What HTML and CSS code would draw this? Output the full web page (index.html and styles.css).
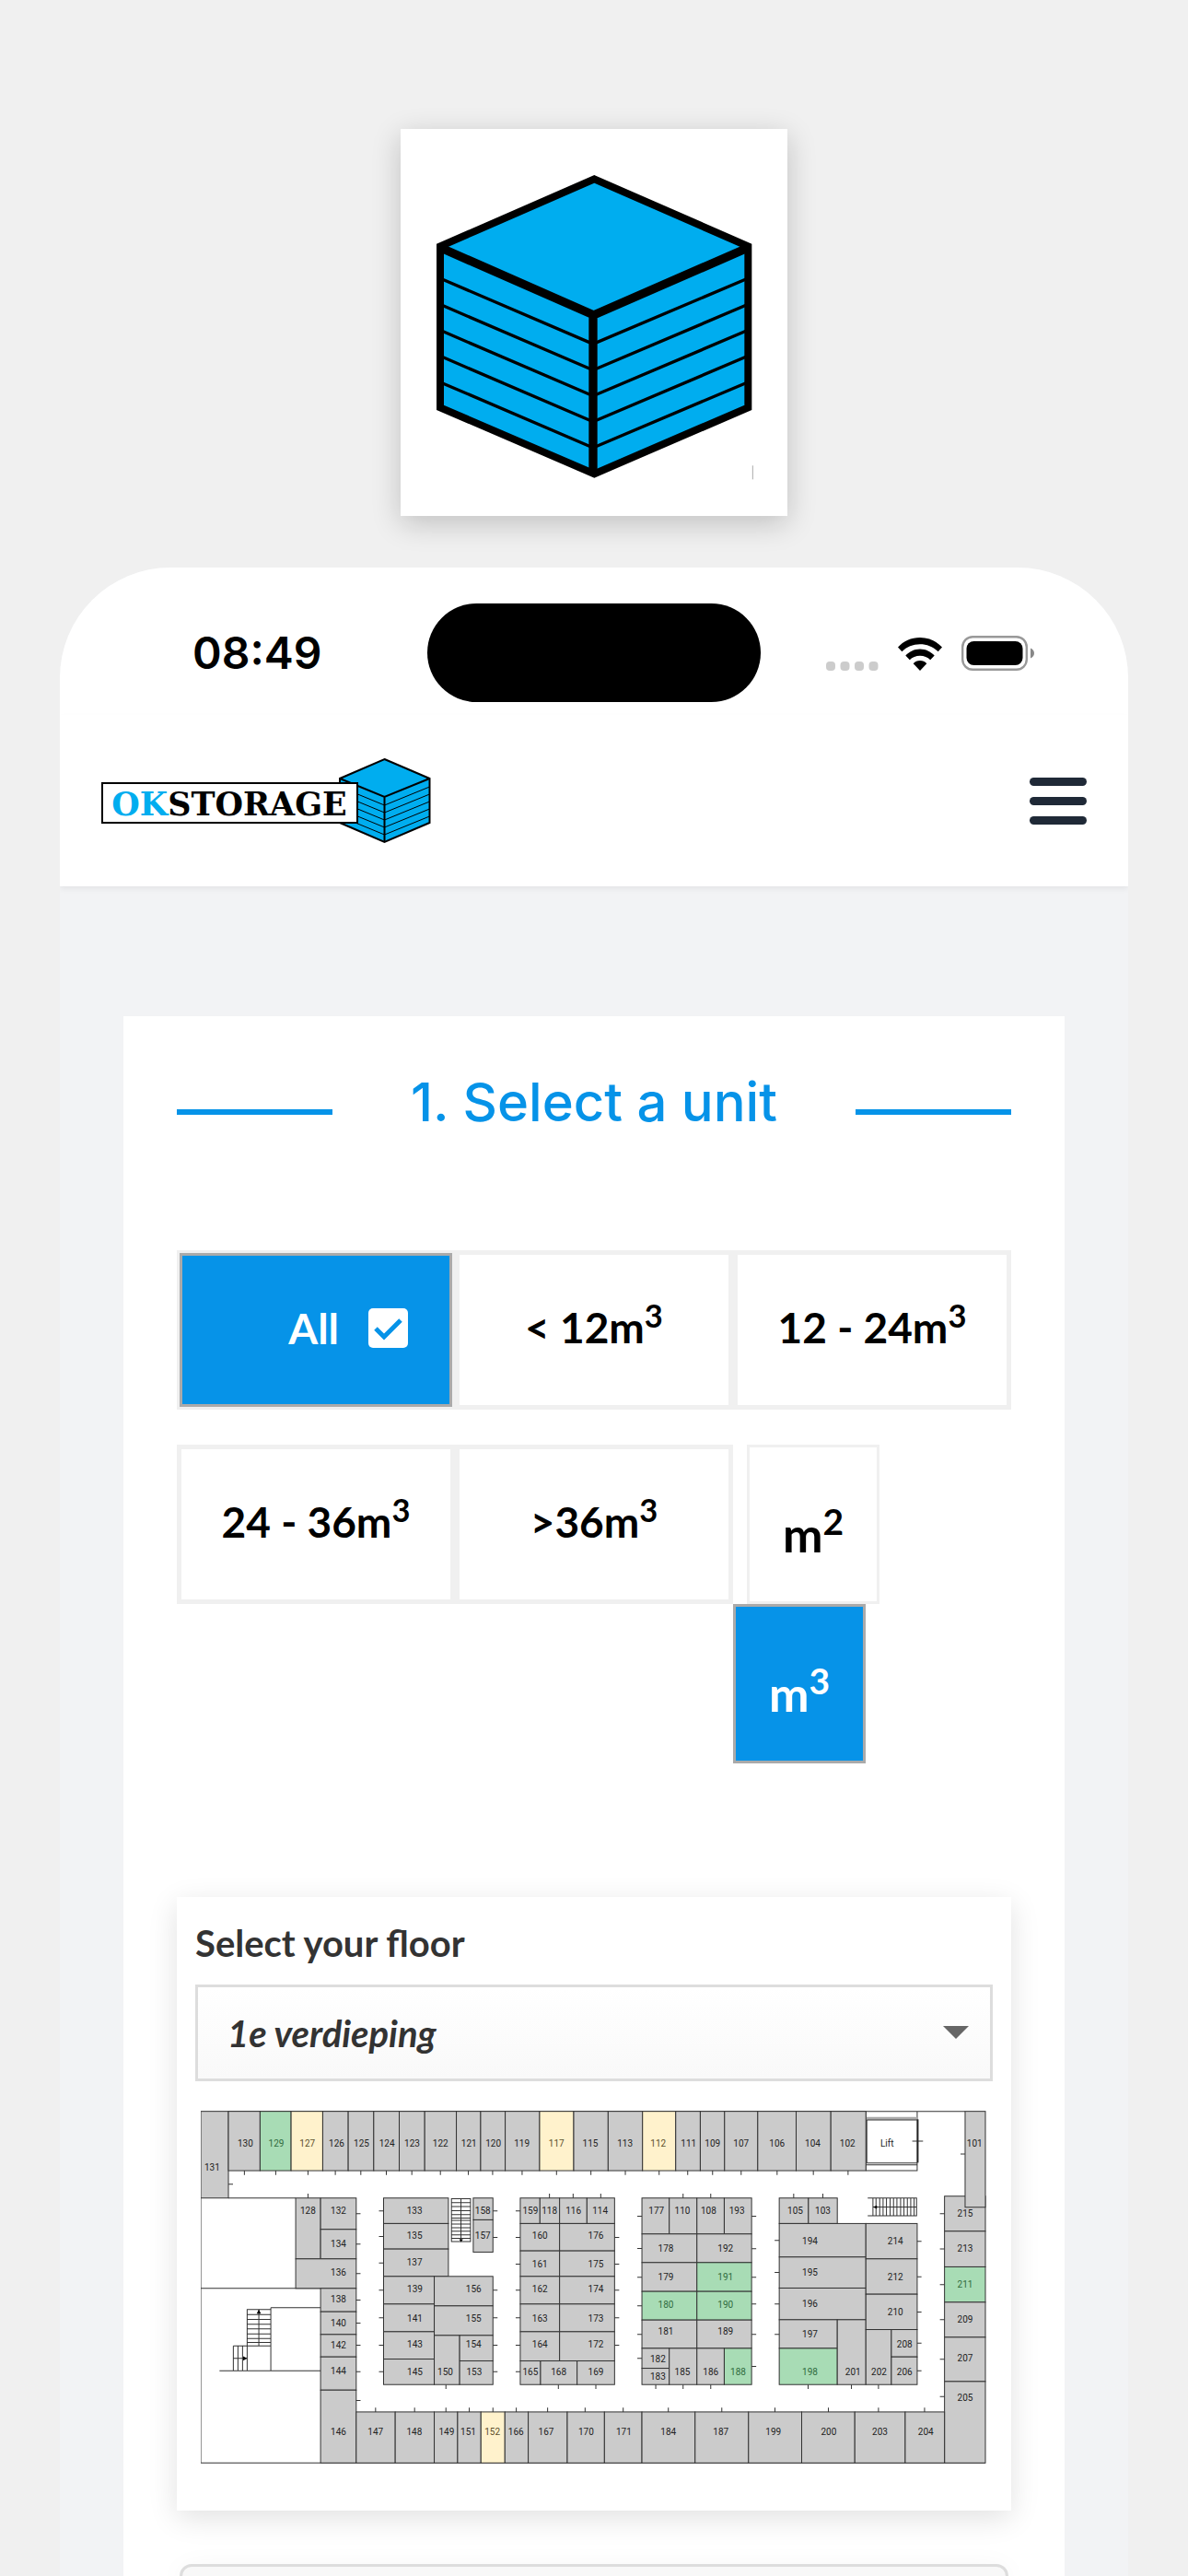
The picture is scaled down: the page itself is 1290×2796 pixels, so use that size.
FILE: index.html
```html
<!DOCTYPE html>
<html lang="en">
<head>
    <meta charset="UTF-8">
    <meta name="viewport" content="width=device-width, initial-scale=1.0">
    <title>OK Storage | Select a unit</title>

    <link rel="stylesheet" href="styles.css">
</head>
<body>
    <div class="app-icon">
        <svg viewBox="45 59 1260 1260" role="img" aria-label="OK Storage">
            <path fill="#00adef" stroke="#000" stroke-width="24" d="M676 222L1177 441V966L676 1182L174 966V441Z"/>
            <path fill="none" stroke="#000" stroke-width="28" d="M176 446L674 665L1176 446M672 665V1180"/>
            <path fill="none" stroke="#000" stroke-width="10" d="M180 548L672 759L1170 548M180 633L672 844L1170 633M180 717L672 928L1170 717M180 801L672 1012L1170 801M180 886L672 1097L1170 886"/>
            <path stroke="#aaa" stroke-width="3" d="M1192 1155V1200"/>
        </svg>
    </div>

    <div class="phone">
        <div class="status-bar">
            <span class="time">08:49</span>
            <span class="island"></span>
            <div class="status-icons">
                <svg class="signal" viewBox="0 0 57 10">
                    <g fill="#ccc">
                        <rect width="10" height="10" rx="4"/>
                        <rect x="15.5" width="10" height="10" rx="4"/>
                        <rect x="31" width="10" height="10" rx="4"/>
                        <rect x="46.5" width="10" height="10" rx="4"/>
                    </g>
                </svg>
                <svg class="wifi" viewBox="0 0 48 36">
                    <path d="M24 0C33.500 0 42 4 48 10.500L43.600 15.300C38.500 10.200 31.600 7.300 24 7.300S9.500 10.200 4.400 15.300L0 10.500C6 4 14.500 0 24 0Z"/>
                    <path d="M24 12.500C30.200 12.500 35.700 15.300 39.700 19.500L35.200 24.300C32.300 21.300 28.400 19.700 24 19.700S15.700 21.300 12.800 24.300L8.300 19.500C12.300 15.300 17.800 12.500 24 12.500Z"/>
                    <path d="M24 25C26.900 25 29.400 26.200 31.300 28.200L24 36L16.700 28.200C18.600 26.200 21.100 25 24 25Z"/>
                </svg>
                <svg class="battery" viewBox="0 0 80 38">
                    <rect x="1.200" y="1.200" width="69.600" height="35.600" rx="11" fill="none" stroke="#999" stroke-width="2.400"/>
                    <rect x="5.500" y="6" width="61" height="26" rx="8"/>
                    <path fill="#888" d="M75 13.500C77.500 14.500 79 16.500 79 19S77.500 23.500 75 24.500Z"/>
                </svg>
            </div>
        </div>

        <header class="header">
            <a href="#" class="logo">
                <svg viewBox="110 822 358 94" role="img" aria-label="OKSTORAGE">
                    <path fill="#00adef" stroke="#000" stroke-width="2" d="M417.500 824L466.500 845V893L417.500 914L369 893V845Z"/>
                    <path fill="none" stroke="#000" stroke-width="2" d="M369 845L417.500 865L466.500 845M417.500 865V914"/>
                    <path fill="none" stroke="#000" stroke-width="1" d="M369 854L417.500 874L466.500 854M369 862L417.500 882L466.500 862M369 870L417.500 890L466.500 870M369 878L417.500 898L466.500 878M369 886L417.500 906L466.500 886"/>
                    <rect x="111" y="850" width="277" height="43" fill="#fff" stroke="#000" stroke-width="2"/>
                    <text class="logo-text" x="249" y="885" text-anchor="middle"><tspan fill="#00adef">OK</tspan>STORAGE</text>
                </svg>
            </a>
            <button class="menu-btn" aria-label="Menu">
                <span></span>
                <span></span>
                <span></span>
            </button>
        </header>

        <main class="main">
            <section class="card">
                <h2 class="card-title">1. Select a unit</h2>

                <form class="filters">
                    <label class="option option-all">
                        <input type="radio" name="size" checked>
                        <span>All</span>
                        <svg class="check" viewBox="0 0 43 43">
                            <rect width="43" height="43" rx="5" fill="#fff"/>
                            <path fill="none" stroke="#0693e8" stroke-width="5" d="M8 22L17 31L35 13"/>
                        </svg>
                    </label>
                    <label class="option">
                        <input type="radio" name="size">
                        <span>&lt; 12m<sup>3</sup></span>
                    </label>
                    <label class="option">
                        <input type="radio" name="size">
                        <span>12 - 24m<sup>3</sup></span>
                    </label>
                    <label class="option">
                        <input type="radio" name="size">
                        <span>24 - 36m<sup>3</sup></span>
                    </label>
                    <label class="option">
                        <input type="radio" name="size">
                        <span>&gt;36m<sup>3</sup></span>
                    </label>
                    <div class="measure">
                        <label class="measure-btn measure-area">
                            <input type="radio" name="measure">
                            <span>m<sup>2</sup></span>
                        </label>
                        <label class="measure-btn measure-active">
                            <input type="radio" name="measure" checked>
                            <span>m<sup>3</sup></span>
                        </label>
                    </div>
                </form>

                <div class="floor">
                    <label class="floor-label" for="floor-select">Select your floor</label>
                    <div class="select-wrap">
                        <select id="floor-select">
                            <option>1e verdieping</option>
                        </select>
                    </div>
                    <svg class="floor-map" id="floor-map" viewBox="54 62 2560 1150">
                        <g class="walls">
                            <path d="M54 346V1208H2608M54 640H444M144 64H2542M144 346H363M2219 257H2386V64M2219 64V257M2219 238H2386"/>
                            <path d="M115 908H444M282 703H444M282 703V908M205 709H282V827H205ZM205 725H282M205 741H282M205 757H282M205 772H282M205 788H282M205 803H282M205 816H282M243 709V827M205 827V908M160 827H205M160 827V908M175 827V908M190 827V908M160 868H205"/>
                            <path d="M870 348H932V488H870ZM901 348V488M870 361H932M870 374H932M870 387H932M870 400H932M870 411H932M870 419H932M870 431H932M870 443H932M870 454H932M870 466H932M870 477H932"/>
                            <path d="M2225 346H2384V404H2225M2242 346V404M2252 346V404M2264 346V404M2275 346V404M2286 346V404M2298 346V404M2309 346V404M2320 346V404M2332 346V404M2343 346V404M2354 346V404M2365 346V404M2376 346V404M2242 375H2384"/>
                        </g>
                        <path d="M236 722L243 709L250 722ZM192 861L205 868L192 875ZM895 480L901 489L908 480ZM2255 370L2242 375L2255 381Z"/>
                        <path fill="#aaa" d="M2220 82H2388V91H2220Z"/>
                        <path class="walls" d="M2222 92V232M2222 92H2386M2222 232H2386M2370 161H2405"/>
                        <path class="lift-door" d="M2388 90V231"/>
                        <text x="2288" y="178">Lift</text>
                        <g id="units"></g>
                        <path class="ticks" d="M196 257v14M298 257v14M403 257v14M492 257v14M575 257v14M658 257v14M741 257v14M834 257v14M925 257v14M1004 257v14M1100 257v14M1212 257v14M1324 257v14M1436 257v14M1546 257v14M1639 257v14M1720 257v14M1813 257v14M1930 257v14M2048 257v14M2161 257v14M144 301h15M403 346v-14M560 397h14M560 496h14M560 592h14M560 678h14M560 753h14M560 825h14M560 911h14M560 1005h14M649 388h-15M649 471h-15M649 557h-15M649 646h-15M649 736h-15M649 825h-15M649 911h-15M1005 388h15M1005 474h15M1005 646h15M1005 736h15M1005 825h15M1005 911h15M1094 388h-15M1094 474h-15M1094 561h-15M1094 646h-15M1094 736h-15M1094 825h-15M1094 911h-15M1401 474h15M1401 561h15M1401 646h15M1401 736h15M1401 825h15M1189 346v-14M1266 346v-14M1356 346v-14M1624 346v-14M1714 346v-14M1984 346v-14M2079 346v-14M1490 405h-15M1490 510h-15M1490 604h-15M1490 697h-15M1490 790h-15M1490 868h-15M1847 405h15M1847 511h15M1847 604h15M1847 691h15M1847 790h15M1847 894h15M1937 484h-15M1937 588h-15M1937 691h-15M1937 790h-15M2386 487h14M2386 602h14M2386 717h14M2386 818h14M2386 908h14M2475 397h-15M2475 512h-15M2475 628h-15M2475 742h-15M2475 871h-15M2475 992h-15M2542 203h-15M852 953v14M1218 953v14M1340 953v14M1535 953v14M1624 953v14M1714 953v14M2031 953v14M2172 953v14M2260 953v14M623 1042v-14M750 1042v-14M852 1042v-14M928 1042v-14M1005 1042v-14M1081 1042v-14M1183 1042v-14M1305 1042v-14M1429 1042v-14M1576 1042v-14M1750 1042v-14M1923 1042v-14M2097 1042v-14M2260 1042v-14M2410 1042v-14"/>
                    </svg>
                </div>

                <div class="unit-info"></div>
            </section>
        </main>
    </div>

    <script src="map.js"></script>
</body>
</html>
```
FILE: styles.css
```css
* {
    margin: 0;
    padding: 0;
    box-sizing: border-box;
}

body {
    font-family: Lato, 'Open Sans', sans-serif;
    color: #000;
    background-color: #f0f0f0;
    display: flex;
    flex-direction: column;
    min-height: 100vh;
    padding: 140px 65px 0;
}

.app-icon {
    width: 420px;
    height: 420px;
    margin: 0 auto 56px;
    background-color: #fff;
    box-shadow: 0 8px 30px rgba(0, 0, 0, 0.2);
}

.app-icon svg {
    display: block;
    width: 100%;
}

.phone {
    flex: 1;
    display: flex;
    flex-direction: column;
    background-color: #f2f3f5;
    border-radius: 120px 120px 0 0;
    overflow: hidden;
}

/* Status bar */
.status-bar {
    display: grid;
    grid-template-columns: 1fr 362px 1fr;
    align-items: center;
    padding: 39px 0 14px;
    background-color: #fff;
}

.time {
    padding-left: 144px;
    font-family: Inter, sans-serif;
    font-size: 48px;
    font-weight: 600;
}

.island {
    height: 107px;
    border-radius: 54px;
    background-color: #000;
}

.status-icons {
    display: flex;
    align-items: flex-end;
    gap: 21px;
    padding-left: 71px;
}

.signal {
    width: 57px;
    height: 10px;
}

.wifi {
    width: 48px;
    height: 36px;
}

.battery {
    width: 80px;
    height: 38px;
}

/* Header */
.header {
    display: flex;
    align-items: center;
    justify-content: space-between;
    height: 186px;
    padding: 0 45px;
    background-color: #fff;
    box-shadow: 0 3px 6px rgba(0, 0, 0, 0.06);
}

.logo svg {
    display: block;
    width: 358px;
    height: 94px;
}

.logo-text {
    font-family: 'DejaVu Serif', serif;
    font-size: 35px;
    font-weight: 700;
}

.menu-btn {
    display: flex;
    flex-direction: column;
    gap: 12px;
    width: 62px;
    border: none;
    background: none;
    cursor: pointer;
}

.menu-btn span {
    height: 9px;
    border-radius: 5px;
    background-color: #1f2937;
}

/* Unit selection */
.main {
    flex: 1;
    display: flex;
    flex-direction: column;
    padding: 141px 69px 0;
}

.card {
    flex: 1;
    display: flex;
    flex-direction: column;
    padding: 61px 58px 0;
    background-color: #fff;
}

.card-title {
    display: flex;
    align-items: flex-end;
    justify-content: space-between;
    margin-bottom: 129px;
    font-family: Inter, sans-serif;
    font-size: 58px;
    font-weight: 500;
    line-height: 64px;
    color: #0693e8;
}

.card-title::before,
.card-title::after {
    content: '';
    width: 169px;
    height: 6px;
    margin-bottom: 18px;
    background-color: #0693e8;
}

.filters {
    display: grid;
    grid-template-columns: repeat(3, 1fr);
    row-gap: 38px;
    margin-bottom: 145px;
}

.filters input {
    position: absolute;
    opacity: 0;
}

.option {
    display: flex;
    align-items: center;
    justify-content: center;
    height: 173px;
    padding-bottom: 6px;
    border: 5px solid #f0f0f0;
    font-size: 46px;
    font-weight: 700;
    cursor: pointer;
}

.option-all {
    justify-content: flex-end;
    gap: 32px;
    padding: 0 48px 4px 0;
    border-width: 3px;
    background-color: #0693e8;
    box-shadow: inset 0 0 0 3px #aaa;
    color: #fff;
}

.check {
    width: 43px;
    height: 43px;
}

sup {
    font-size: 75%;
    line-height: 0;
    vertical-align: 0.5em;
}

.measure-btn {
    display: flex;
    align-items: center;
    justify-content: center;
    width: 144px;
    height: 173px;
    padding-top: 20px;
    border: 3px solid #f0f0f0;
    font-size: 52px;
    font-weight: 700;
    cursor: pointer;
}

.measure-area {
    margin-left: 15px;
}

.measure-active {
    border-color: #aaa;
    background-color: #0693e8;
    color: #fff;
}

/* Floor plan */
.floor {
    margin-bottom: 58px;
    padding: 26px 20px 50px;
    background-color: #fff;
    box-shadow: 0 8px 30px rgba(0, 0, 0, 0.12);
}

.floor-label {
    display: block;
    margin-bottom: 21px;
    font-size: 40px;
    font-weight: 700;
    line-height: 48px;
    color: #333;
}

.select-wrap {
    position: relative;
    margin-bottom: 32px;
}

.select-wrap::after {
    content: '';
    position: absolute;
    top: 45px;
    right: 26px;
    border: 14px solid transparent;
    border-top-color: #666;
    border-bottom: none;
    pointer-events: none;
}

.select-wrap select {
    display: block;
    width: 100%;
    height: 105px;
    padding: 0 32px;
    border: 3px solid #ddd;
    border-radius: 0;
    background: linear-gradient(#fff, #f9f9f9);
    appearance: none;
    font-family: inherit;
    font-size: 40px;
    font-style: italic;
    font-weight: 700;
    color: #333;
}

.floor-map {
    display: block;
    width: 854px;
    max-width: 100%;
    margin: 0 auto;
}

.walls,
.ticks {
    fill: none;
    stroke: #333;
    stroke-width: 3;
}

.lift-door {
    fill: none;
    stroke: #222;
    stroke-width: 5;
}

.floor-map rect {
    fill: #cbcbcb;
    stroke: #333;
    stroke-width: 3;
}

.floor-map text {
    font-family: Roboto, sans-serif;
    font-size: 30px;
    text-anchor: middle;
    fill: #222;
}

.floor-map .free rect {
    fill: #a8dcb5;
}

.floor-map .free text {
    fill: #2f6b3d;
}

.floor-map .reserved rect {
    fill: #fff2cc;
}

.floor-map .reserved text {
    fill: #5c4f2b;
}

.unit-info {
    flex: 1;
    min-height: 12px;
    margin: 0 3px;
    border: 3px solid #ddd;
    border-bottom: none;
    border-radius: 20px 20px 0 0;
    background-color: #f8f8f8;
    box-shadow: 0 8px 30px rgba(0, 0, 0, 0.08);
}

@media (max-width: 1200px) {
    body {
        padding-left: 20px;
        padding-right: 20px;
    }

    .main {
        padding-left: 20px;
        padding-right: 20px;
    }
}
```
FILE: map.js
```js
// number, left, top, right, bottom, label x, label y
const units = [
    [131, 54, 64, 144, 346, 91, 247],
    [130, 144, 64, 247, 257, 199, 167],
    [129, 247, 64, 348, 257, 300, 167],
    [127, 348, 64, 451, 257, 401, 167],
    [126, 451, 64, 534, 257, 496, 167],
    [125, 534, 64, 617, 257, 577, 167],
    [124, 617, 64, 700, 257, 660, 167],
    [123, 700, 64, 783, 257, 742, 167],
    [122, 783, 64, 886, 257, 834, 167],
    [121, 886, 64, 965, 257, 927, 167],
    [120, 965, 64, 1045, 257, 1006, 167],
    [119, 1045, 64, 1157, 257, 1099, 167],
    [117, 1157, 64, 1268, 257, 1212, 167],
    [115, 1268, 64, 1380, 257, 1322, 167],
    [113, 1380, 64, 1492, 257, 1435, 167],
    [112, 1492, 64, 1600, 257, 1543, 167],
    [111, 1600, 64, 1680, 257, 1642, 167],
    [109, 1680, 64, 1759, 257, 1720, 167],
    [107, 1759, 64, 1867, 257, 1813, 167],
    [106, 1867, 64, 1992, 257, 1930, 167],
    [104, 1992, 64, 2105, 257, 2046, 167],
    [102, 2105, 64, 2219, 257, 2159, 167],

    [128, 363, 346, 444, 544, 403, 387],
    [132, 444, 346, 560, 448, 502, 387],
    [134, 444, 448, 560, 544, 502, 495],
    [136, 363, 544, 560, 640, 502, 587],
    [138, 444, 640, 560, 716, 502, 675],
    [140, 444, 716, 560, 790, 502, 752],
    [142, 444, 790, 560, 863, 502, 825],
    [144, 444, 863, 560, 971, 502, 907],
    [146, 444, 971, 560, 1208, 502, 1106],

    [133, 649, 346, 860, 429, 750, 387],
    [135, 649, 429, 860, 512, 750, 468],
    [137, 649, 512, 860, 601, 750, 555],
    [139, 649, 601, 814, 691, 751, 643],
    [141, 649, 691, 814, 781, 751, 736],
    [143, 649, 781, 814, 870, 751, 821],
    [145, 649, 870, 814, 953, 751, 910],
    [158, 941, 346, 1005, 417, 972, 387],
    [157, 941, 417, 1005, 522, 972, 468],
    [156, 814, 601, 1005, 697, 942, 643],
    [155, 814, 697, 1005, 793, 942, 736],
    [154, 896, 793, 1005, 876, 942, 821],
    [153, 896, 876, 1005, 953, 944, 910],
    [150, 814, 793, 896, 953, 850, 910],

    [159, 1094, 346, 1158, 429, 1127, 387],
    [118, 1158, 346, 1222, 429, 1189, 387],
    [116, 1222, 346, 1311, 429, 1267, 387],
    [114, 1311, 346, 1401, 429, 1354, 387],
    [160, 1094, 429, 1222, 518, 1158, 468],
    [161, 1094, 518, 1222, 601, 1158, 561],
    [162, 1094, 601, 1222, 691, 1158, 643],
    [163, 1094, 691, 1222, 781, 1158, 736],
    [164, 1094, 781, 1222, 876, 1158, 821],
    [176, 1222, 429, 1401, 518, 1340, 468],
    [175, 1222, 518, 1401, 601, 1340, 561],
    [174, 1222, 601, 1401, 691, 1340, 643],
    [173, 1222, 691, 1401, 781, 1340, 736],
    [172, 1222, 781, 1401, 876, 1340, 821],
    [165, 1094, 876, 1160, 953, 1127, 910],
    [168, 1160, 876, 1279, 953, 1219, 910],
    [169, 1279, 876, 1401, 953, 1340, 910],

    [177, 1490, 346, 1579, 463, 1537, 387],
    [110, 1579, 346, 1669, 463, 1622, 387],
    [108, 1669, 346, 1758, 463, 1707, 387],
    [193, 1758, 346, 1847, 463, 1799, 387],
    [178, 1490, 463, 1669, 556, 1568, 509],
    [179, 1490, 556, 1669, 650, 1568, 603],
    [180, 1490, 650, 1669, 743, 1568, 694],
    [181, 1490, 743, 1669, 835, 1568, 780],
    [192, 1669, 463, 1847, 556, 1762, 509],
    [191, 1669, 556, 1847, 650, 1762, 603],
    [190, 1669, 650, 1847, 743, 1762, 694],
    [189, 1669, 743, 1847, 835, 1762, 780],
    [182, 1490, 835, 1579, 900, 1542, 868],
    [183, 1490, 900, 1579, 953, 1542, 926],
    [185, 1579, 835, 1669, 953, 1622, 910],
    [186, 1669, 835, 1758, 953, 1714, 910],
    [188, 1758, 835, 1847, 953, 1803, 910],

    [105, 1937, 346, 2032, 429, 1989, 387],
    [103, 2032, 346, 2126, 429, 2079, 387],
    [194, 1937, 429, 2219, 538, 2037, 486],
    [195, 1937, 538, 2219, 639, 2037, 587],
    [196, 1937, 639, 2219, 742, 2037, 690],
    [197, 1937, 742, 2126, 835, 2037, 788],
    [198, 1937, 835, 2126, 953, 2037, 910],
    [201, 2126, 742, 2219, 953, 2177, 910],
    [214, 2219, 429, 2386, 544, 2315, 486],
    [212, 2219, 544, 2386, 659, 2315, 602],
    [210, 2219, 659, 2386, 774, 2315, 717],
    [202, 2219, 774, 2302, 953, 2262, 910],
    [208, 2302, 774, 2386, 863, 2345, 821],
    [206, 2302, 863, 2386, 953, 2345, 910],

    [215, 2475, 340, 2608, 454, 2542, 397],
    [101, 2542, 64, 2608, 376, 2573, 167],
    [213, 2475, 454, 2608, 570, 2542, 511],
    [211, 2475, 570, 2608, 685, 2542, 626],
    [209, 2475, 685, 2608, 799, 2542, 741],
    [207, 2475, 799, 2608, 943, 2542, 866],
    [205, 2475, 943, 2608, 1208, 2542, 995],

    [147, 560, 1042, 687, 1208, 623, 1106],
    [148, 687, 1042, 814, 1208, 749, 1106],
    [149, 814, 1042, 890, 1208, 854, 1106],
    [151, 890, 1042, 966, 1208, 925, 1106],
    [152, 966, 1042, 1044, 1208, 1003, 1106],
    [166, 1044, 1042, 1120, 1208, 1080, 1106],
    [167, 1120, 1042, 1247, 1208, 1178, 1106],
    [170, 1247, 1042, 1368, 1208, 1308, 1106],
    [171, 1368, 1042, 1490, 1208, 1431, 1106],
    [184, 1490, 1042, 1663, 1208, 1576, 1106],
    [187, 1663, 1042, 1837, 1208, 1747, 1106],
    [199, 1837, 1042, 2010, 1208, 1918, 1106],
    [200, 2010, 1042, 2183, 1208, 2098, 1106],
    [203, 2183, 1042, 2347, 1208, 2265, 1106],
    [204, 2347, 1042, 2475, 1208, 2414, 1106]
];

const free = [129, 180, 188, 190, 191, 198, 211];
const reserved = [112, 117, 127, 152];

document.getElementById('units').innerHTML = units.map(function([number, left, top, right, bottom, x, y]) {
    let status = 'taken';
    if (free.includes(number)) status = 'free';
    if (reserved.includes(number)) status = 'reserved';

    return `<g class="${status}">
        <rect x="${left}" y="${top}" width="${right - left}" height="${bottom - top}"/>
        <text x="${x}" y="${y + 11}">${number}</text>
    </g>`;
}).join('');
```
